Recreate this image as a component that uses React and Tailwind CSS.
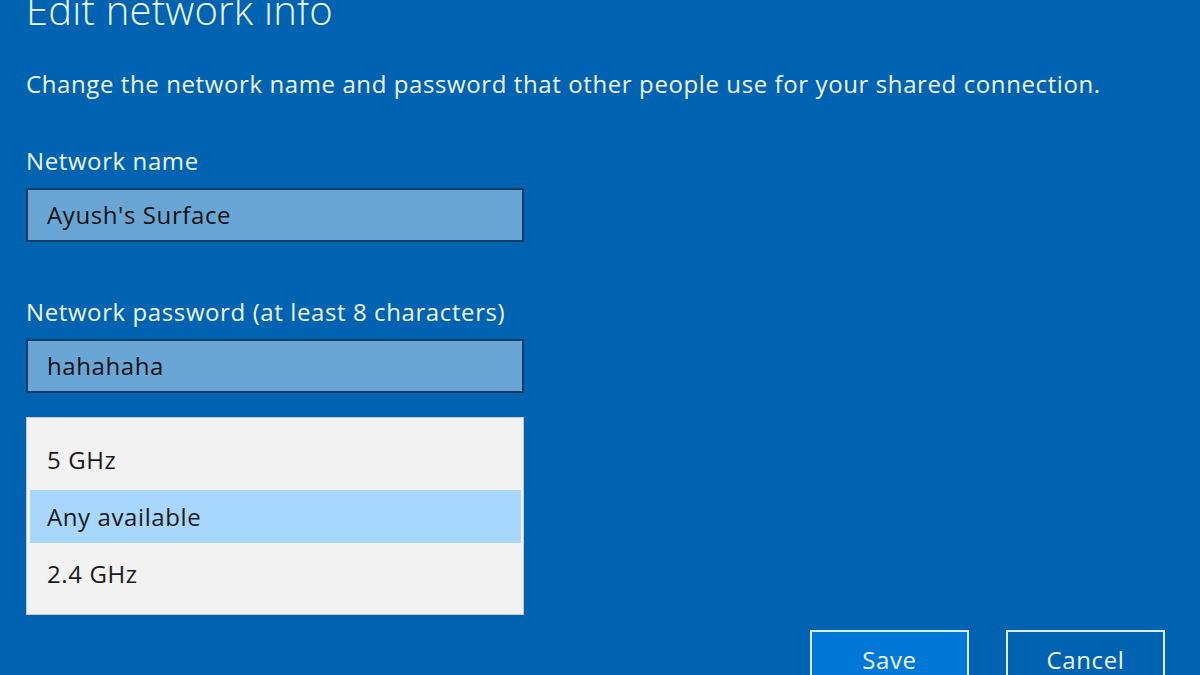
const Field = ({ label, value }) => (
  <div>
    <div className="h-[30px] leading-[30px] text-[24px] text-[#eef5fb]">{label}</div>
    <div className="mt-[12px] w-[498px] h-[54px] border-2 border-[#163d66] bg-[#6aa6d5] pl-[19px] flex items-center text-[24px] text-[#111]">
      {value}
    </div>
  </div>
)

const options = ['5 GHz', 'Any available', '2.4 GHz']

export default function App() {
  return (
    <div className="w-[1200px] h-[675px] overflow-hidden bg-[#0063b1] pl-[26px] font-['Open_Sans','Noto_Sans',sans-serif] tracking-[0.6px]">
      <h1 className="mt-[-12px] h-[44px] leading-[44px] text-[40px] font-light tracking-[0.2px] text-[#eef5fb]">Edit network info</h1>

      <p className="mt-[37px] h-[30px] leading-[30px] text-[24px] text-[#eef5fb]">
        Change the network name and password that other people use for your shared connection.
      </p>

      <div className="mt-[47px]">
        <Field label="Network name" value="Ayush's Surface" />
      </div>

      <div className="mt-[55px]">
        <Field label="Network password (at least 8 characters)" value="hahahaha" />
      </div>

      <div className="mt-[24px] w-[498px] h-[198px] border border-[#c9c9c9] bg-[#f2f2f2] py-[13px] text-[24px] text-[#1a1a1a]">
        {options.map((o) => (
          <div key={o} className="h-[57px] py-[2px] pl-[3px] pr-[2px]">
            <div className={`h-full flex items-center pl-[17px] ${o === 'Any available' ? 'bg-[#a8d7fd]' : ''}`}>{o}</div>
          </div>
        ))}
      </div>

      <div className="mt-[15px] flex justify-end gap-[37px] pr-[35px]">
        <button className="w-[159px] h-[58px] border-2 border-[#dfeaf5] bg-[#0078d7] text-[24px] text-[#eef5fb] pt-[2px]">Save</button>
        <button className="w-[159px] h-[58px] border-2 border-[#dfeaf5] bg-[#0063b1] text-[24px] text-[#eef5fb] pt-[2px]">Cancel</button>
      </div>
    </div>
  )
}
